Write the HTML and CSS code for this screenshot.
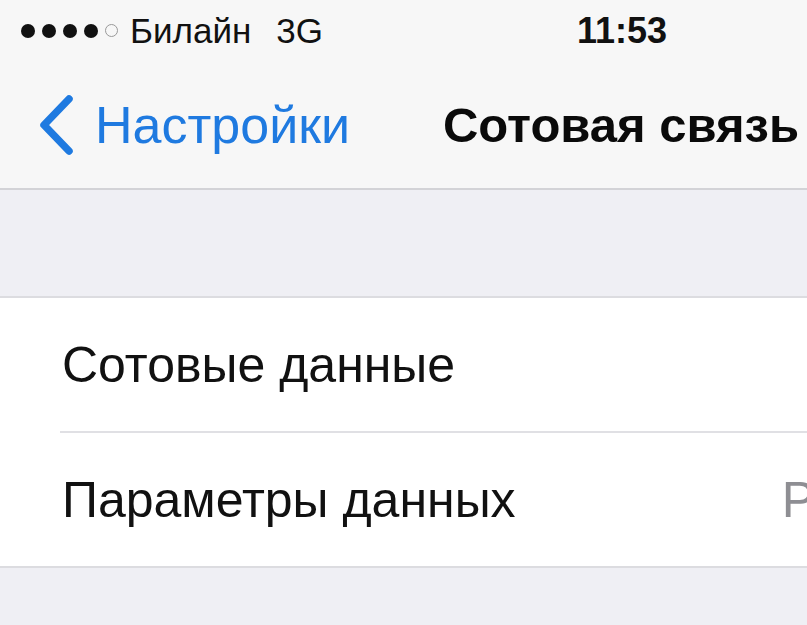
FILE: index.html
```html
<!DOCTYPE html>
<html lang="ru">
<head>
<meta charset="utf-8">
<link rel="stylesheet" href="styles.css">
</head>
<body>
<div class="screen">
  <div class="status">
    <div class="carrier">
      <span class="signal">
        <i class="dot"></i><i class="dot"></i><i class="dot"></i><i class="dot"></i><i class="dot empty"></i>
      </span>
      <span class="name">Билайн</span>
      <span class="net">3G</span>
    </div>
    <div class="time">11:53</div>
  </div>
  <div class="nav">
    <div class="back">
      <svg class="chev" width="40" height="64" viewBox="0 0 40 64"><path d="M33 6 L8 32 L33 58" fill="none" stroke="#1f7ae0" stroke-width="7.5" stroke-linecap="round" stroke-linejoin="round"/></svg>
      <span class="back-label">Настройки</span>
    </div>
    <div class="title">Сотовая связь</div>
  </div>
  <div class="gap"></div>
  <div class="group">
    <div class="cell"><span class="label">Сотовые данные</span></div>
    <div class="cell"><span class="label">Параметры данных</span><span class="value">Р</span></div>
  </div>
  <div class="gap bottom"></div>
</div>
</body>
</html>
```
FILE: styles.css
```css
html, body {
  margin: 0;
  padding: 0;
  background: #efeff4;
}
.screen {
  width: 807px;
  height: 625px;
  overflow: hidden;
  font-family: "Liberation Sans", Arial, sans-serif;
  background: #efeff4;
}
.status {
  height: 62px;
  background: #f7f7f7;
  display: flex;
  align-items: center;
  padding-left: 21px;
  box-sizing: border-box;
}
.carrier {
  display: flex;
  align-items: center;
  font-size: 35px;
  color: #111;
}
.signal {
  display: flex;
  gap: 7px;
  margin-right: 12px;
}
.dot {
  display: block;
  width: 14px;
  height: 14px;
  border-radius: 50%;
  background: #111;
}
.dot.empty {
  background: transparent;
  width: 11px;
  height: 11px;
  border: 1.5px solid #999;
}
.net {
  margin-left: 25px;
}
.time {
  margin-left: 254px;
  font-size: 36px;
  font-weight: bold;
  color: #111;
}
.nav {
  height: 126px;
  background: #f7f7f7;
  border-bottom: 2px solid #d3d3d7;
  display: flex;
  align-items: center;
  padding-left: 36px;
}
.back {
  display: flex;
  align-items: center;
  color: #1f7ae0;
}
.chev {
  display: block;
  margin-right: 19px;
}
.back-label {
  font-size: 52px;
}
.title {
  margin-left: 93px;
  font-size: 49px;
  font-weight: bold;
  color: #0a0a0a;
  white-space: nowrap;
}
.gap {
  height: 106px;
  background: #efeff4;
  border-bottom: 2px solid #dcdce0;
}
.gap.bottom {
  border-bottom: none;
}
.group {
  background: #fff;
  border-bottom: 2px solid #dcdce0;
}
.cell {
  height: 133px;
  display: flex;
  align-items: center;
  margin-left: 60px;
  padding-left: 2px;
  font-size: 50px;
  color: #111;
  justify-content: space-between;
  white-space: nowrap;
}
.cell + .cell {
  border-top: 2px solid #e0e0e4;
}
.value {
  color: #8e8e93;
  margin-right: -8px;
}
```
